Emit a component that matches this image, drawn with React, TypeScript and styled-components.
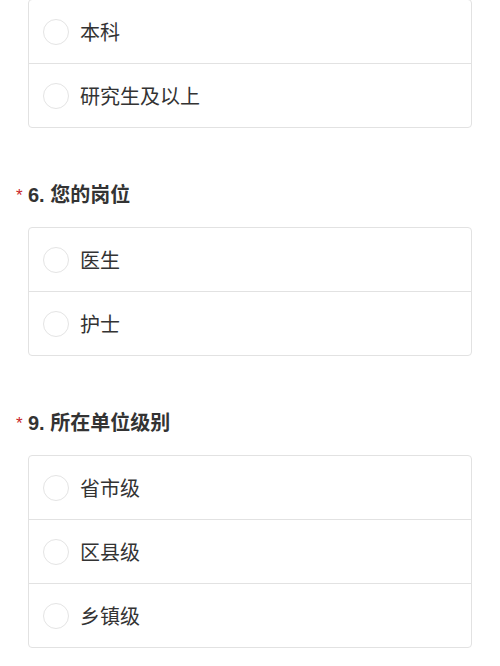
import React from "react";
import styled, { createGlobalStyle } from "styled-components";

const GlobalStyle = createGlobalStyle`
  html, body {
    margin: 0;
    padding: 0;
    background: #ffffff;
  }
  body {
    font-family: "Liberation Sans", "Noto Sans CJK SC", sans-serif;
    color: #333333;
  }
`;

const Page = styled.div`
  margin-top: -1px;
  padding: 0 28px;
  width: 500px;
  box-sizing: border-box;
`;

const Question = styled.section`
  & + & {
    margin-top: 53px;
  }
`;

const Title = styled.h2`
  position: relative;
  margin: 0 0 18px 0;
  font-size: 20px;
  line-height: 28px;
  font-weight: bold;
  color: #333333;
`;

const Star = styled.span`
  position: absolute;
  left: -12px;
  top: 1px;
  color: #c9252b;
  font-size: 17px;
  font-weight: normal;
`;

const Card = styled.div`
  border: 1px solid #e2e2e2;
  border-radius: 4px;
  background: #ffffff;
`;

const Option = styled.label`
  display: flex;
  align-items: center;
  height: 63px;
  padding-left: 14px;
  font-size: 20px;
  color: #333333;
  & + & {
    border-top: 1px solid #e2e2e2;
  }
`;

const Radio = styled.span`
  width: 24px;
  height: 24px;
  border: 1px solid #e4e4e4;
  border-radius: 50%;
  margin-right: 11px;
  flex-shrink: 0;
`;

const questions = [
  { title: null, options: ["本科", "研究生及以上"] },
  { title: "6. 您的岗位", options: ["医生", "护士"] },
  { title: "9. 所在单位级别", options: ["省市级", "区县级", "乡镇级"] },
];

const App = () => {
  return (
    <>
      <GlobalStyle />
      <Page>
        {questions.map((q, i) => (
          <Question key={i}>
            {q.title && (
              <Title>
                <Star>*</Star>
                {q.title}
              </Title>
            )}
            <Card>
              {q.options.map((o) => (
                <Option key={o}>
                  <Radio />
                  {o}
                </Option>
              ))}
            </Card>
          </Question>
        ))}
      </Page>
    </>
  );
};

export default App;
